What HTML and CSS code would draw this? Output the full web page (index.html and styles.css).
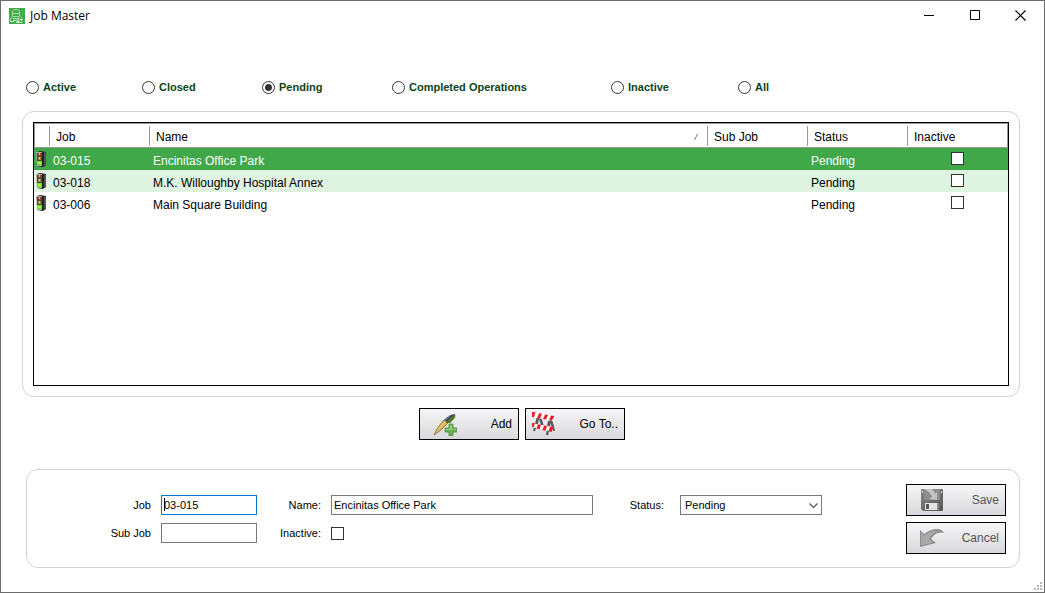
FILE: index.html
```html
<!DOCTYPE html>
<html lang="en">
<head>
<meta charset="utf-8">
<title>Job Master</title>
<link rel="stylesheet" href="styles.css">
</head>
<body>
<svg class="defs" width="0" height="0" aria-hidden="true">
  <defs>
    <linearGradient id="gray" x1="0" y1="0" x2="1" y2="1"><stop offset="0" stop-color="#858585"/><stop offset="1" stop-color="#555"/></linearGradient>
    <linearGradient id="gold" x1="0" y1="0" x2="1" y2="1"><stop offset="0" stop-color="#8d6a22"/><stop offset=".45" stop-color="#e9c467"/><stop offset="1" stop-color="#8a5d14"/></linearGradient>
    <symbol id="signal" viewBox="0 0 11 16">
      <path d="M1 1 4 0 10 1v13l-3 2-6-1z" fill="#222"/>
      <path d="M8 1l2 1v11l-2 2z" fill="#555"/>
      <path d="M0 1h6v14H1z" fill="#a9aca0"/>
      <path d="M1 2h5v12H1z" fill="#4b4a38"/>
      <path d="M2 2h3v3H2z" fill="#a5402e"/><path d="M3 2h1v2H3z" fill="#e0b0a0"/>
      <path d="M2 6h3v3H2z" fill="#a08a3c"/><path d="M3 6h1v2H3z" fill="#e2cc85"/>
      <path d="M1 10h5v4H1z" fill="#6fdc2a"/><path d="M2 11h3v2H2z" fill="#9dff4a"/>
    </symbol>
  </defs>
</svg>
<div class="window">
  <header class="titlebar">
    <svg class="app-icon" viewBox="0 0 16 16" aria-hidden="true">
      <rect width="16" height="16" fill="#3fae49"/>
      <path d="M1.500 13.500v-3l2-2V4q0-2.500 2.500-2.500h2q2.500 0 2.500 2.500v4l1 1M3.500 5.500h7M3.500 8.500h7" fill="none" stroke="#a5dbaa"/>
      <path d="M1 13.500h4M4 10.500h3M4 12.500h3M8 10.500h2v3H8zM12.500 9.500v4M11 11.500h3M7 14.500h6" fill="none" stroke="#cdebd0"/>
    </svg>
    <h1 class="title">Job Master</h1>
    <div class="win-buttons">
      <button class="win-button" aria-label="Minimize"><svg width="12" height="11" viewBox="0 0 12 11"><path d="M1 5.500h10" stroke="#000"/></svg></button>
      <button class="win-button" aria-label="Maximize"><svg width="11" height="11" viewBox="0 0 11 11"><path d="M.5.5h9v9h-9z" fill="none" stroke="#000"/></svg></button>
      <button class="win-button" aria-label="Close"><svg width="12" height="11" viewBox="0 0 12 11"><path d="M.5.5l10 10M10.500.5l-10 10" stroke="#000" stroke-width="1.200"/></svg></button>
    </div>
  </header>

  <div class="filters" role="radiogroup" aria-label="Job filter">
    <label class="filter"><input class="radio" type="radio" name="filter">Active</label>
    <label class="filter"><input class="radio" type="radio" name="filter">Closed</label>
    <label class="filter"><input class="radio" type="radio" name="filter" checked>Pending</label>
    <label class="filter"><input class="radio" type="radio" name="filter">Completed Operations</label>
    <label class="filter"><input class="radio" type="radio" name="filter">Inactive</label>
    <label class="filter"><input class="radio" type="radio" name="filter">All</label>
  </div>

  <section class="panel list-panel">
    <div class="grid-box">
      <table class="jobs">
        <colgroup><col class="c-icon"><col class="c-job"><col><col class="c-std"><col class="c-std"><col class="c-last"></colgroup>
        <thead>
          <tr>
            <td></td>
            <th scope="col"><span class="head">Job</span></th>
            <th scope="col"><span class="head">Name<svg class="sort" width="4" height="6" viewBox="0 0 4 6" aria-hidden="true"><path d="M3.500 0 .5 6" stroke="#777" fill="none"/></svg></span></th>
            <th scope="col"><span class="head">Sub Job</span></th>
            <th scope="col"><span class="head">Status</span></th>
            <th scope="col"><span class="head">Inactive</span></th>
          </tr>
        </thead>
        <tbody>
          <tr class="selected"><td class="icon-cell"><svg class="signal"><use href="#signal"/></svg></td><td>03-015</td><td>Encinitas Office Park</td><td></td><td>Pending</td><td class="check-cell"><input class="check" type="checkbox" aria-label="03-015 inactive"></td></tr>
          <tr class="alt"><td class="icon-cell"><svg class="signal"><use href="#signal"/></svg></td><td>03-018</td><td>M.K. Willoughby Hospital Annex</td><td></td><td>Pending</td><td class="check-cell"><input class="check" type="checkbox" aria-label="03-018 inactive"></td></tr>
          <tr><td class="icon-cell"><svg class="signal"><use href="#signal"/></svg></td><td>03-006</td><td>Main Square Building</td><td></td><td>Pending</td><td class="check-cell"><input class="check" type="checkbox" aria-label="03-006 inactive"></td></tr>
        </tbody>
      </table>
    </div>
  </section>

  <div class="actions">
    <button class="btn">
      <svg class="btn-icon" viewBox="0 0 24 24" aria-hidden="true">
        <path d="M1 23Q4 15 11 8l4 3Q9 18 1 23z" fill="url(#gold)" stroke="#7a5a1e" stroke-width=".7"/>
        <path d="M11 8Q17 2 22 2q1 1-1 3l-6 6z" fill="#39405e"/>
        <path d="M15 11l-2-1 8-7q2 0 1 3l-5 5z" fill="#4e7d2b"/>
        <path d="M12 8.500 17 4.500" stroke="#8d93ad" stroke-width=".8"/>
        <path d="M16 12h4v4h4v4h-4v4h-4v-4h-4v-4h4z" fill="#6bb055" stroke="#4a8a3c" stroke-width=".8"/>
        <path d="M17 13h2v4h4v1H13v-1h4z" fill="#93cb80"/>
      </svg>
      Add
    </button>
    <button class="btn btn-goto">
      <svg class="btn-icon" viewBox="0 0 24 24" aria-hidden="true">
        <path d="M7 5 3 19M9 5l4 13M19 9l-3 14M20 8l3 11" stroke="#5a5a5a" stroke-width="2.200" fill="none"/>
        <path d="M1 0l22 4v5L1 5z" fill="#fff"/>
        <path d="M1 0h3.500L3 5.300 1 5zM8 1.300l3 .5-2 4.700-3-.6zM14 2.400l3 .5-2 4.700-3-.6zM20 3.500l3 .5v1l-2 3.600-3-.5z" fill="#e6232a"/>
        <path d="M1 11l21 4v5L1 15z" fill="#fff"/>
        <path d="M1 11h3l-1.500 4.500L1 15zM7 12.200l3 .6-1.500 4.500-3-.8zM13 13.400l3 .6-1.500 4.700-3-.8zM19 14.500l3 .6V17l-1.500 3-3-.8z" fill="#e6232a"/>
        <path d="M7 6 6 12M9 7l2 6M18 9l-1 5M20 9l2 6" stroke="#5c5c5c" stroke-width="2" fill="none"/>
      </svg>
      Go To..
    </button>
  </div>

  <form class="panel form-panel">
    <div class="fields">
      <label for="job">Job</label>
      <div class="caret-wrap"><input class="text focused" id="job" value="03-015"><span class="caret"></span></div>
      <label for="name">Name:</label>
      <input class="text" id="name" value="Encinitas Office Park">
      <label for="status">Status:</label>
      <div class="select-wrap">
        <select class="text select" id="status"><option>Pending</option></select>
        <svg class="chevron" width="9" height="5" viewBox="0 0 9 5" aria-hidden="true"><path d="M.5.5l4 4 4-4" fill="none" stroke="#555" stroke-width="1.200"/></svg>
      </div>
      <label for="sub">Sub Job</label>
      <input class="text" id="sub">
      <label for="inactive">Inactive:</label>
      <input class="check" id="inactive" type="checkbox">
    </div>
    <div class="form-buttons">
      <button class="btn muted" type="button">
        <svg class="btn-icon" viewBox="0 0 24 24" aria-hidden="true">
          <path d="M1 2q0-1 1-1h20q1 0 1 1v20q0 1-1 1H3l-2-2z" fill="url(#gray)"/>
          <path d="M4 1h16v11H4z" fill="#8c8c8c"/>
          <path d="M2 3h1v2H2zM21 3h1v2h-1z" fill="#ddd"/>
          <path d="M4 1h6q4 0 5 5l2-2v8l-8-1 3-2Q9 3 4 1z" fill="#c4c4c4"/>
          <path d="M5 15h12v7H5z" fill="#e4e4e4"/><path d="M6 16h3v5H6z" fill="#5a5a5a"/><path d="M17 15h2v7h-2z" fill="#888"/>
        </svg>
        Save
      </button>
      <button class="btn muted" type="button">
        <svg class="btn-icon" viewBox="0 0 24 24" aria-hidden="true">
          <path d="M0 4l4 4Q11 3 17 3q5 0 7 4-8-2-13 6l5 4L0 21z" fill="#8d8d8d"/>
          <path d="M1 6.500l3 3Q11 4.500 17 4.500l4 .6Q13 5 9 13l4 3.500L1 19.500z" fill="#a9a9a9"/>
        </svg>
        Cancel
      </button>
    </div>
  </form>
  <svg class="grip" width="8" height="8" viewBox="0 0 8 8" aria-hidden="true"><path d="M6 0h2v2H6zM3 3h2v2H3zM6 3h2v2H6zM0 6h2v2H0zM3 6h2v2H3zM6 6h2v2H6z" fill="#b9b9b9"/></svg>
</div>
</body>
</html>
```

FILE: styles.css
```css
* { box-sizing: border-box; }

body {
  margin: 0;
  font: 12px/16px "Liberation Sans", Arial, sans-serif;
  color: #000;
  background: #fff;
}

button, input, select { font: inherit; color: inherit; }

.defs { position: absolute; }

.window {
  position: relative;
  display: flex;
  flex-direction: column;
  min-height: 100vh;
  padding: 0 24px 24px 21px;
  border: 1px solid #6b6b6b;
}

.titlebar {
  display: flex;
  align-items: center;
  gap: 5px;
  height: 29px;
  margin: 0 -24px 0 -13px;
}

.app-icon { width: 16px; height: 16px; }

.title {
  flex: 1;
  margin: 0;
  font: 12px/16px "Open Sans", "Noto Sans", sans-serif;
}

.win-buttons { display: flex; }

.win-button {
  display: grid;
  place-items: center;
  width: 46px;
  height: 29px;
  padding: 0;
  border: 0;
  background: none;
}

.filters {
  display: grid;
  grid-template-columns: 116fr 120fr 130fr 219fr 127fr 282fr;
  margin: 49px 0 16px;
  padding-left: 4px;
  font-size: 11px;
  font-weight: bold;
  color: #0b4420;
}

.filter {
  display: flex;
  align-items: center;
  gap: 4px;
}

.radio, .check {
  appearance: none;
  flex: none;
  width: 13px;
  height: 13px;
  margin: 0;
  border: 1px solid #333;
  background: #fff;
}

.radio { border-radius: 50%; }
.radio:checked { background: radial-gradient(circle, #333 3px, #fff 4px); }

.panel {
  border: 1px solid #d3d3d3;
  border-radius: 12px;
}

.list-panel {
  display: flex;
  flex: 1;
  padding: 10px;
}

.grid-box {
  flex: 1;
  border: 1px solid #000;
}

.jobs {
  width: 100%;
  table-layout: fixed;
  border-collapse: separate;
  border-spacing: 0;
}

.c-icon { width: 15px; }
.c-job, .c-std { width: 100px; }
.c-last { width: 101px; }

.jobs thead td, .jobs th {
  height: 25px;
  padding: 2px 0 1px;
  border-top: 1px solid #999;
  border-bottom: 1px solid #999;
  font-weight: normal;
  text-align: left;
}

.jobs thead td { border-left: 1px solid #999; }
.jobs th:last-child { border-right: 1px solid #999; }

.head {
  display: flex;
  align-items: center;
  justify-content: space-between;
  height: 20px;
  padding: 2px 9px 0 6px;
  border-left: 1px solid #999;
}

.jobs tbody td {
  height: 22px;
  padding: 5px 4px 1px;
}

.jobs .icon-cell { padding: 0 2px 1px; }
.signal { display: block; width: 11px; height: 16px; }
.selected { background: #41a84a; color: #fff; }
.alt { background: #def3e0; }
.jobs .check-cell { padding: 0 0 2px; }
.check-cell .check { display: block; margin: 0 auto; }

.actions {
  display: flex;
  justify-content: center;
  gap: 6px;
  margin: 11px 0 29px;
  padding-left: 2px;
}

.btn {
  display: flex;
  align-items: center;
  justify-content: space-between;
  width: 100px;
  height: 32px;
  padding: 0 6px 0 13px;
  border: 1px solid #000;
  background: linear-gradient(#f6f6f8, #d9d9dd);
}

.btn-goto { padding-left: 5px; }
.btn-icon { width: 24px; height: 24px; }
.muted { color: #555; }

.form-panel {
  display: flex;
  gap: 84px;
  margin-left: 4px;
  padding: 14px 13px 13px 0;
}

.fields {
  display: grid;
  flex: 1;
  grid-template-columns: 124px 96px 54px 1fr 61px 148px;
  grid-auto-rows: 20px;
  gap: 8px 10px;
  align-items: center;
  padding-top: 11px;
  font-size: 11px;
}

.fields label { text-align: right; }

.text {
  display: block;
  width: 100%;
  height: 20px;
  padding: 0 2px;
  border: 1px solid #7a7a7a;
  border-radius: 0;
  outline: 0;
  background: #fff;
}

.focused { border-color: #0078d7; }
.caret-wrap, .select-wrap { position: relative; }
.select-wrap { padding-left: 6px; }
.select { appearance: none; padding-left: 4px; }

.caret {
  position: absolute;
  top: 3px;
  left: 3px;
  width: 1px;
  height: 13px;
  background: #000;
}

.chevron {
  position: absolute;
  top: 8px;
  right: 4px;
}

.form-buttons {
  display: flex;
  flex-direction: column;
  gap: 6px;
}

.grip {
  position: absolute;
  right: 2px;
  bottom: 2px;
}
```
